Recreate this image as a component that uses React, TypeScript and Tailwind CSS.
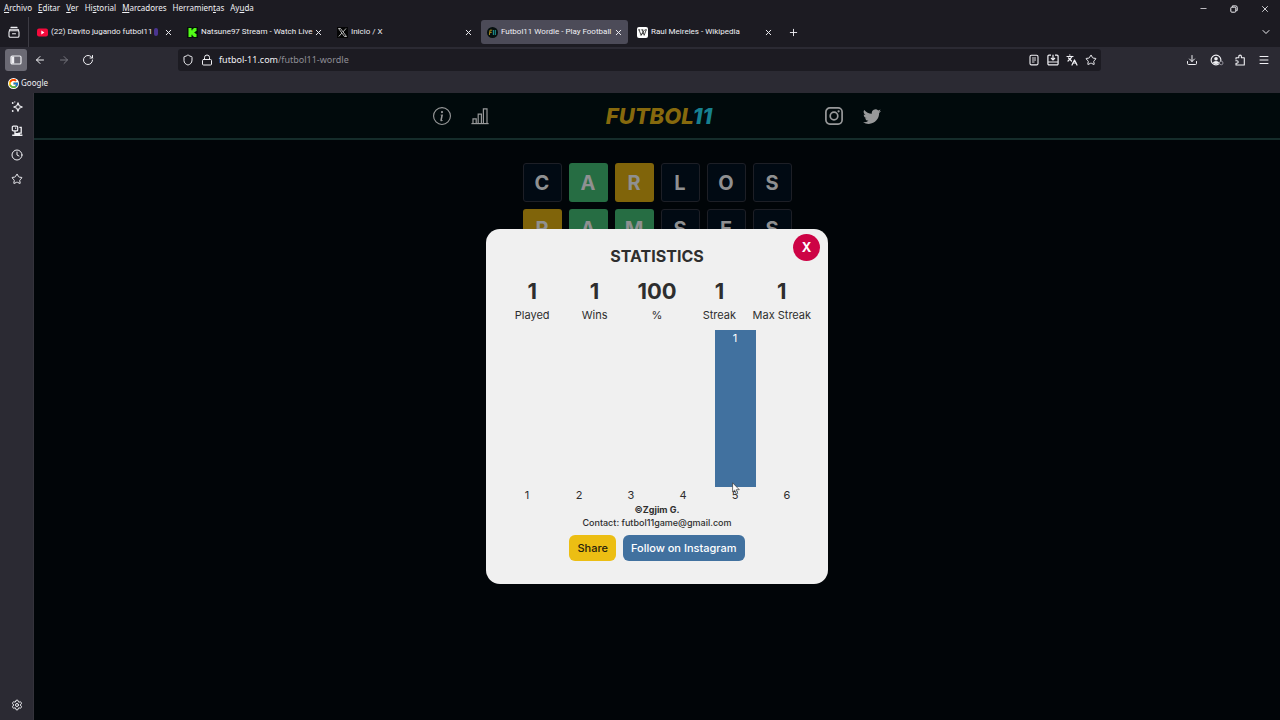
import * as React from 'react'
import { ArrowLeft, ArrowRight, ChevronDown, Clock, Download, Languages, Lock, Menu, Minus, Plus, RotateCw, Settings, Shield, Star, X } from 'lucide-react'
import { BsInfoCircle, BsTwitter } from 'react-icons/bs'
import { FcGoogle } from 'react-icons/fc'
import { clsx } from 'clsx'

const MENU = [
  ['', 'A', 'rchivo'],
  ['', 'E', 'ditar'],
  ['', 'V', 'er'],
  ['Hi', 's', 'torial'],
  ['', 'M', 'arcadores'],
  ['Herramien', 't', 'as'],
  ['Ay', 'u', 'da'],
]

type Tab = { title: string; icon: React.ReactNode; active?: boolean; live?: boolean }

const TABS: Tab[] = [
  { title: '(22) Davito jugando futbol11', icon: <YoutubeIcon />, live: true },
  { title: 'Natsune97 Stream - Watch Live', icon: <KickIcon /> },
  { title: 'Inicio / X', icon: <XIcon /> },
  { title: 'Futbol11 Wordle - Play Football', icon: <FutbolIcon />, active: true },
  { title: 'Raul Meireles - Wikipedia', icon: <WikipediaIcon /> },
]

type Cell = { letter: string; state: 'absent' | 'present' | 'correct' }

const ROWS: Cell[][] = [
  [
    { letter: 'C', state: 'absent' },
    { letter: 'A', state: 'correct' },
    { letter: 'R', state: 'present' },
    { letter: 'L', state: 'absent' },
    { letter: 'O', state: 'absent' },
    { letter: 'S', state: 'absent' },
  ],
  [
    { letter: 'R', state: 'present' },
    { letter: 'A', state: 'correct' },
    { letter: 'M', state: 'correct' },
    { letter: 'S', state: 'absent' },
    { letter: 'E', state: 'absent' },
    { letter: 'S', state: 'absent' },
  ],
]

const STATS = [
  { value: 1, label: 'Played' },
  { value: 1, label: 'Wins' },
  { value: 100, label: '%' },
  { value: 1, label: 'Streak' },
  { value: 1, label: 'Max Streak' },
]

const GUESSES = [0, 0, 0, 0, 1, 0]

function YoutubeIcon() {
  return (
    <svg viewBox="0 0 11 11" className="size-[11px] shrink-0">
      <rect y="1.5" width="11" height="8" rx="2" fill="#f50a3c" />
      <path d="M4.3 3.6 7.4 5.5 4.3 7.4Z" fill="#fff" />
    </svg>
  )
}

function KickIcon() {
  return (
    <svg viewBox="0 0 11 11" className="size-[11px] shrink-0">
      <rect width="11" height="11" fill="#07100a" />
      <path d="M1.5 1h3v2.2h1V2.1h1V1h3v3h-1v1h-1v1h1v1h1v3h-3V8.9h-1V7.8h-1V10h-3Z" fill="#53fc18" />
    </svg>
  )
}

function XIcon() {
  return (
    <svg viewBox="0 0 11 11" className="size-[11px] shrink-0">
      <rect width="11" height="11" fill="#050505" />
      <path d="M1.5 1.5h2l6 8h-2ZM9 1.5 6.1 4.9M1.8 9.5 4.9 6" fill="none" stroke="#ddd" strokeWidth="0.8" />
    </svg>
  )
}

function FutbolIcon() {
  return (
    <svg viewBox="0 0 11 11" className="size-[11px] shrink-0">
      <circle cx="5.5" cy="5.5" r="5.5" fill="#06100f" />
      <path d="M2.4 8 3 3.2h2.2M2.8 5.4h1.9" fill="none" stroke="#a88a1c" strokeWidth="1" />
      <path d="M6.4 3V8M8.3 3V8" stroke="#1e8f8f" strokeWidth="1.1" />
    </svg>
  )
}

function WikipediaIcon() {
  return (
    <svg viewBox="0 0 11 11" className="size-[11px] shrink-0">
      <rect width="11" height="11" rx="2" fill="#fff" />
      <path d="M1.2 2.8h2M4.3 2.8h2M7.8 2.8h2M2.1 2.9l2 5.4 3.4-5.4M5.2 2.9l2 5.4 2-5.4M4.1 8.3l1.6-2.6" fill="none" stroke="#222" strokeWidth="0.8" />
    </svg>
  )
}

function TabsBoxIcon() {
  return (
    <svg viewBox="0 0 12 12" className="size-3" fill="none" stroke="currentColor" strokeWidth="1.1" strokeLinecap="round">
      <path d="M3 1.4h6" />
      <path d="M1.4 4.4a1.2 1.2 0 0 1 1.2-1.2h6.8a1.2 1.2 0 0 1 1.2 1.2" />
      <rect x="1" y="4.8" width="10" height="6.4" rx="1.3" />
      <path d="M4.5 7.8h3" />
    </svg>
  )
}

function SidebarIcon() {
  return (
    <svg viewBox="0 0 12 12" className="size-3">
      <rect x="1" y="2" width="10" height="8" rx="1.3" fill="none" stroke="currentColor" strokeWidth="1.2" />
      <path d="M1.5 2.5H4.2V9.5H1.5Z" fill="currentColor" />
    </svg>
  )
}

function ReaderIcon() {
  return (
    <svg viewBox="0 0 12 12" className="size-3" fill="none" stroke="currentColor">
      <rect x="2" y="1.3" width="8" height="9.6" rx="1.4" strokeWidth="1.1" />
      <path d="M4 4h4M4 6h4M4 8h2.5" strokeWidth="0.9" />
    </svg>
  )
}

function InstallIcon() {
  return (
    <svg viewBox="0 0 12 12" className="size-3" fill="none" stroke="currentColor" strokeWidth="1.2">
      <path d="M4 1.2H2A1.1 1.1 0 0 0 .9 2.3v7.4A1.1 1.1 0 0 0 2 10.8h8a1.1 1.1 0 0 0 1.1-1.1V2.3A1.1 1.1 0 0 0 10 1.2H8" />
      <path d="M6 .8v4.8M4 4l2 2 2-2M1 8h10" />
    </svg>
  )
}

function AccountIcon() {
  return (
    <svg viewBox="0 0 14 12" className="h-3 w-3.5">
      <circle cx="6" cy="6" r="4.9" fill="none" stroke="currentColor" strokeWidth="1.1" />
      <circle cx="6" cy="4.7" r="1.8" fill="currentColor" />
      <path d="M2.8 8.8a3.3 2.4 0 0 1 6.4 0A4.6 4.6 0 0 1 2.8 8.8Z" fill="currentColor" />
      <circle cx="11.2" cy="9" r="1.8" fill="#2b2a33" stroke="#9a99a3" strokeWidth="0.9" />
    </svg>
  )
}

function ExtensionIcon() {
  return (
    <svg viewBox="0 0 12 12" className="size-3" fill="none" stroke="currentColor" strokeWidth="1.1" strokeLinejoin="round">
      <path d="M2 5.4V3.8h2.8V2.4a1.3 1.3 0 0 1 2.6 0v1.4H10.3V11H2V9.2h1a1.2 1.2 0 0 0 0-2.4H1.4" />
    </svg>
  )
}

function RestoreIcon() {
  return (
    <svg viewBox="0 0 8 8" className="size-2" fill="none" stroke="currentColor" strokeWidth="1">
      <rect x="0.8" y="2.2" width="5" height="5" rx="1" />
      <path d="M2.4 1.8V.9h3.4a1.4 1.4 0 0 1 1.4 1.4v3.3H6.3" />
    </svg>
  )
}

function SparkleIcon() {
  return (
    <svg viewBox="0 0 12 12" className="size-3">
      <path d="M7 1.8 8.2 4.8 11.2 6 8.2 7.2 7 10.2 5.8 7.2 2.8 6 5.8 4.8Z" fill="none" stroke="currentColor" strokeWidth="1.1" strokeLinejoin="round" />
      <circle cx="1.7" cy="2" r="0.9" fill="currentColor" />
      <circle cx="1.7" cy="10" r="0.9" fill="currentColor" />
      <circle cx="3.8" cy="0.9" r="0.6" fill="currentColor" />
    </svg>
  )
}

function SyncedIcon() {
  return (
    <svg viewBox="0 0 12 12" className="size-3" fill="none" stroke="currentColor">
      <rect x="1.3" y="1.1" width="5.4" height="4.8" rx="1" strokeWidth="1.2" />
      <path d="M8.4 2.4h1.8v5.8H7.4M4 6v2.4" strokeWidth="1.3" />
      <path d="M1.2 10.2h10.2M3.4 8.8h5.6" strokeWidth="1.5" />
      <path d="M4 3.2h1.2" strokeWidth="1.2" />
    </svg>
  )
}

function BarsIcon() {
  return (
    <svg viewBox="0 0 18 18" className="size-[18px]" fill="none" stroke="currentColor" strokeWidth="1.2">
      <path d="M0.4 16.6h17.2" />
      <path d="M2 16.4v-4.6h3.2v4.6M7.2 16.4V7.2h3.2v9.2M12.4 16.4V1.8h3.6v14.6" />
    </svg>
  )
}

function InstagramIcon() {
  return (
    <svg viewBox="0 0 18 18" className="size-[18px]">
      <rect x="0.9" y="0.9" width="16.2" height="16.2" rx="4" fill="none" stroke="currentColor" strokeWidth="1.7" />
      <circle cx="9" cy="9" r="3.8" fill="none" stroke="currentColor" strokeWidth="1.7" />
      <circle cx="13.6" cy="4.3" r="1.1" fill="currentColor" />
    </svg>
  )
}

function MenuBar() {
  return (
    <div className="flex h-[17px] items-center justify-between pl-1 pr-2.5">
      <nav className="flex gap-1.5 text-[8px]">
        {MENU.map(([before, key, after]) => (
          <button key={before + key + after} className="pb-0.5 leading-3">
            {before}
            <span className="underline">{key}</span>
            {after}
          </button>
        ))}
      </nav>
      <div className="flex items-center gap-[22px]">
        <button aria-label="Minimizar"><Minus size={9} /></button>
        <button aria-label="Restaurar"><RestoreIcon /></button>
        <button aria-label="Cerrar"><X size={10} /></button>
      </div>
    </div>
  )
}

function TabStrip() {
  return (
    <div className="flex h-[30px] items-center">
      <button aria-label="Ver pestañas" className="flex w-7 items-center justify-center">
        <TabsBoxIcon />
      </button>
      <div className="mr-0.5 h-full w-px bg-[#3c3b43]" />
      <div className="flex gap-[3px]">
        {TABS.map((tab) => (
          <div
            key={tab.title}
            className={clsx('flex h-6 w-[147px] items-center rounded-[3px] pl-1.5 pr-[5px]', tab.active && 'bg-[#4c4b58]')}
          >
            {tab.icon}
            <button className="ml-[3px] flex min-w-0 flex-1 items-center gap-0.5 whitespace-nowrap text-left font-['Roboto',sans-serif] text-[8px] leading-3">
              {tab.title}
              {tab.live && <span className="h-2 w-1 shrink-0 rounded-full bg-[#4a3590]" />}
            </button>
            <button aria-label="Cerrar pestaña" className="ml-px">
              <X size={9} strokeWidth={2.6} />
            </button>
          </div>
        ))}
      </div>
      <button aria-label="Nueva pestaña" className="ml-2.5">
        <Plus size={11} />
      </button>
      <button aria-label="Listar pestañas" className="ml-auto mr-2">
        <ChevronDown size={12} />
      </button>
    </div>
  )
}

function Toolbar() {
  return (
    <div className="flex h-[26px] items-center bg-[#2b2a33] pl-[5px] pr-2.5">
      <button aria-label="Barra lateral" className="flex size-[22px] items-center justify-center rounded-[3px] bg-[#6b6a74]">
        <SidebarIcon />
      </button>
      <div className="ml-[7px] flex gap-3">
        <button aria-label="Atrás"><ArrowLeft size={12} /></button>
        <button aria-label="Adelante" className="text-[#77767f]"><ArrowRight size={12} /></button>
        <button aria-label="Recargar"><RotateCw size={12} /></button>
      </div>
      <div className="ml-[84px] mr-[85px] flex h-[22px] flex-1 items-center rounded-[3px] bg-[#1c1b22] pl-1 pr-1">
        <Shield size={12} />
        <Lock size={12} className="ml-[7px]" />
        <button className="ml-1.5 flex-1 text-left text-[9px] leading-3">
          futbol-11.com<span className="text-[#8f8e96]">/futbol11-wordle</span>
        </button>
        <div className="flex gap-[7px]">
          <button aria-label="Modo lectura"><ReaderIcon /></button>
          <button aria-label="Instalar"><InstallIcon /></button>
          <button aria-label="Traducir"><Languages size={12} strokeWidth={2.4} /></button>
          <button aria-label="Marcador"><Star size={12} /></button>
        </div>
      </div>
      <div className="flex gap-3">
        <button aria-label="Descargas"><Download size={12} /></button>
        <button aria-label="Cuenta" className="w-3"><AccountIcon /></button>
        <button aria-label="Extensiones"><ExtensionIcon /></button>
        <button aria-label="Menú"><Menu size={12} /></button>
      </div>
    </div>
  )
}

function Sidebar() {
  return (
    <aside className="flex w-[34px] shrink-0 flex-col items-center gap-3 border-r border-[#34333b] bg-[#2b2a33] pb-[9px] pt-2">
      <button aria-label="Asistente"><SparkleIcon /></button>
      <button aria-label="Pestañas sincronizadas"><SyncedIcon /></button>
      <button aria-label="Historial"><Clock size={12} /></button>
      <button aria-label="Marcadores"><Star size={12} /></button>
      <button aria-label="Ajustes" className="mt-auto"><Settings size={12} /></button>
    </aside>
  )
}

function GameHeader() {
  return (
    <header className="flex h-[47px] justify-center border-b-2 border-[#152d2b] bg-[#010a0c] text-[#98999a]">
      <div className="flex w-[448px] items-center justify-between">
        <div className="flex gap-5">
          <button aria-label="Info"><BsInfoCircle size={18} /></button>
          <button aria-label="Statistics"><BarsIcon /></button>
        </div>
        <h1 className="pl-1 text-[22px] font-extrabold italic leading-6 text-[#86690d]">
          FUTBOL<span className="text-[#178090]">11</span>
        </h1>
        <div className="flex gap-5">
          <a href="#instagram" aria-label="Instagram"><InstagramIcon /></a>
          <a href="#twitter" aria-label="Twitter"><BsTwitter size={18} /></a>
        </div>
      </div>
    </header>
  )
}

function Board() {
  return (
    <div className="mt-[23px] flex flex-col items-center gap-[7px]">
      {ROWS.map((row, i) => (
        <div key={i} className="flex gap-[7px]">
          {row.map((cell, j) => (
            <div
              key={j}
              className={clsx(
                'flex size-[39px] items-center justify-center rounded-[3px] text-xl font-bold text-[#8f9091]',
                cell.state === 'absent' && 'border border-[#1d1f26] bg-[#010a13]',
                cell.state === 'present' && 'bg-[#80640a]',
                cell.state === 'correct' && 'bg-[#266d43]'
              )}
            >
              {cell.letter}
            </div>
          ))}
        </div>
      ))}
    </div>
  )
}

function Pointer() {
  return (
    <svg viewBox="0 0 9 13" className="absolute left-[17px] top-[152px] h-[13px] w-[9px]">
      <path d="M.6.8V10l2.1-1.9L4.2 12l1.6-.7-1.6-3.6H7.3Z" fill="#fff" stroke="#333" strokeWidth="0.7" />
    </svg>
  )
}

function GuessChart() {
  const max = Math.max(...GUESSES)

  return (
    <div className="grid grid-cols-6 text-[11px] leading-4">
      {GUESSES.map((count, i) => (
        <div key={i} className="flex flex-col items-center">
          <div className="relative flex h-[157px] w-[41px] items-end">
            {count > 0 && (
              <div className="w-full bg-[#41719f] text-center text-white" style={{ height: `${(count / max) * 100}%` }}>
                {count}
              </div>
            )}
            {count > 0 && <Pointer />}
          </div>
          <span>{i + 1}</span>
        </div>
      ))}
    </div>
  )
}

function StatisticsModal() {
  return (
    <div className="absolute inset-0 flex items-center justify-center">
      <div role="dialog" aria-label="Statistics" className="relative w-[342px] rounded-[14px] bg-[#f0f0f0] px-[15px] pb-[23px] pt-4 text-[#2e2e2e]">
        <button aria-label="Close" className="absolute right-2 top-[5px] size-[27px] rounded-full bg-[#cd0345] text-[13px] font-bold text-white">
          X
        </button>
        <h2 className="text-center text-base font-bold leading-[22px]">STATISTICS</h2>
        <div className="mt-2 grid grid-cols-5 text-center">
          {STATS.map((stat) => (
            <div key={stat.label}>
              <div className="text-[22px] font-bold leading-8">{stat.value}</div>
              <div className="whitespace-nowrap text-[11px] leading-4">{stat.label}</div>
            </div>
          ))}
        </div>
        <div className="mt-[7px]">
          <GuessChart />
        </div>
        <div className="text-center text-[9px] leading-[13px]">
          <p className="font-bold">©Zgjim G.</p>
          <p className="font-medium">Contact: futbol11game@gmail.com</p>
        </div>
        <div className="mt-1.5 flex justify-center gap-[7px] text-[11px] font-medium">
          <button className="h-[26px] rounded-md bg-[#ecbe13] px-2 text-[#26210d]">Share</button>
          <button className="h-[26px] rounded-md bg-[#41719f] px-2 text-white">Follow on Instagram</button>
        </div>
      </div>
    </div>
  )
}

function App() {
  return (
    <div className="flex h-screen flex-col overflow-hidden bg-[#1c1b22] font-['Noto_Sans',sans-serif] text-[#f0f0f4]">
      <MenuBar />
      <TabStrip />
      <Toolbar />
      {/* Bookmarks bar */}
      <div className="flex h-5 items-center bg-[#2b2a33] pl-2">
        <button className="flex items-center gap-0.5 text-[8px] leading-3">
          <span className="rounded-full bg-white"><FcGoogle size={11} /></span>
          Google
        </button>
      </div>
      <div className="flex min-h-0 flex-1">
        <Sidebar />
        <main className="relative flex-1 overflow-hidden bg-[#010508] font-['Inter',sans-serif]">
          <GameHeader />
          <Board />
          <StatisticsModal />
        </main>
      </div>
    </div>
  )
}

export default App
